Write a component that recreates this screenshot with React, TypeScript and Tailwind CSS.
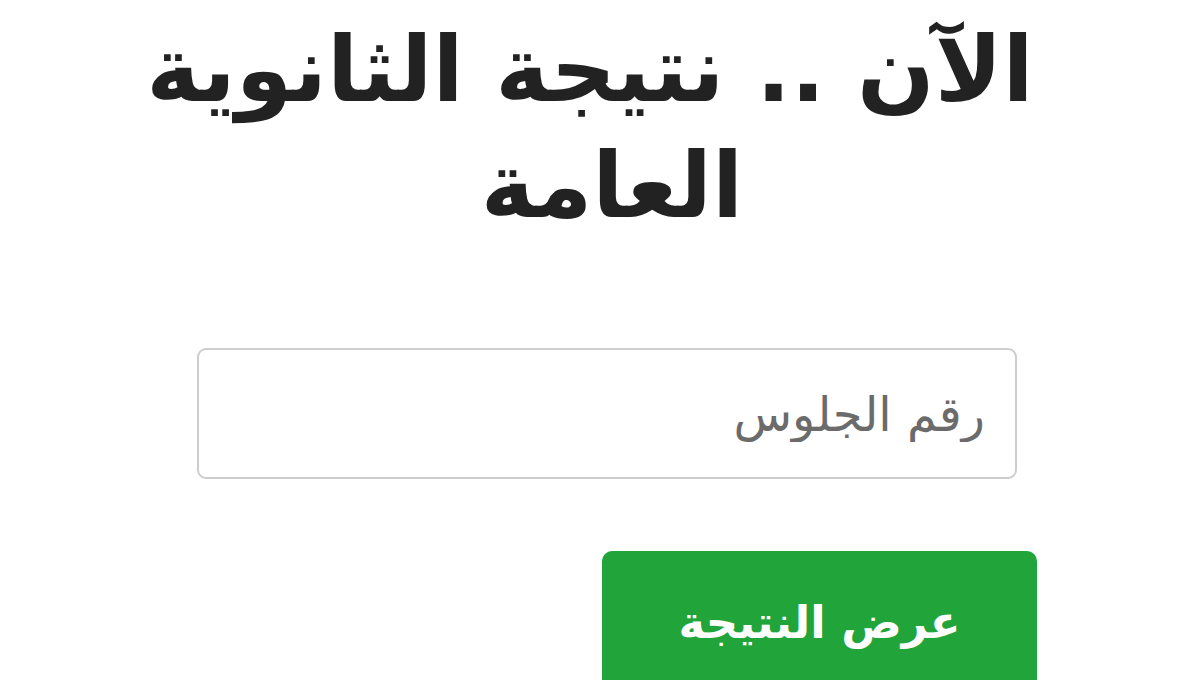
export default function App() {
  return (
    <div
      dir="rtl"
      className="w-[1200px] h-[680px] overflow-hidden bg-white flex flex-col"
      style={{ fontFamily: '"DejaVu Sans", "Noto Sans", sans-serif' }}
    >
      <h1 className="mt-[12px] flex flex-col items-center font-bold text-[#222222] text-[91px] leading-[116px]">
        <span className="pr-[20px]">الآن .. نتيجة الثانوية</span>
        <span className="pl-[24px]">العامة</span>
      </h1>

      <div className="mt-[104px] flex pr-[183px]">
        <div className="w-[820px] h-[131px] rounded-[9px] border-2 border-[#cdcdcd] bg-white flex items-center px-[30px]">
          <input
            type="text"
            placeholder="رقم الجلوس"
            className="w-full bg-transparent outline-none text-[48px] text-[#555] placeholder:text-[#6b6b6b]"
            style={{ fontFamily: '"DejaVu Sans", sans-serif' }}
          />
        </div>
      </div>

      <div className="mt-[72px] flex pr-[163px]">
        <button className="w-[435px] h-[140px] rounded-[10px] bg-[#21a53a] text-white text-[45px] font-bold flex items-start justify-center pt-[38px]">
          عرض النتيجة
        </button>
      </div>
    </div>
  );
}
